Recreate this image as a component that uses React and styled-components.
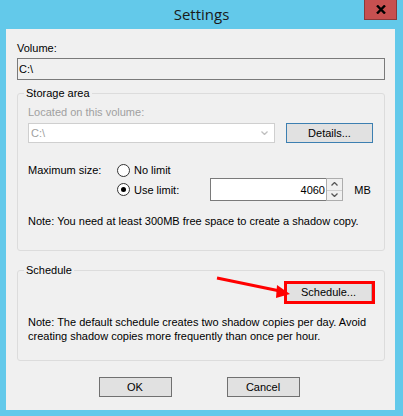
import styled, { createGlobalStyle } from "styled-components";

const Global = createGlobalStyle`
  html, body { margin: 0; padding: 0; background: #63c9ea; }
  body { font-family: "Liberation Sans", Arial, sans-serif; font-size: 11px; color: #000; }
`;

const Window = styled.div`
  width: 403px;
  height: 416px;
  background: #63c9ea;
  position: relative;
  overflow: hidden;
`;

const TitleBar = styled.div`
  height: 29px;
  display: grid;
  grid-template-columns: 1fr auto 1fr;
  align-items: start;
`;

const Title = styled.div`
  grid-column: 2;
  font-family: "Open Sans", "Liberation Sans", sans-serif;
  font-size: 15px;
  line-height: 29px;
  color: #1a1a1a;
`;

const CloseBtn = styled.div`
  grid-column: 3;
  justify-self: end;
  margin-right: 6px;
  width: 33px;
  height: 20px;
  box-sizing: border-box;
  background: #c75050;
  border: 1px solid #8a3a3a;
  border-top: none;
  display: flex;
  align-items: center;
  justify-content: center;
`;

const Client = styled.div`
  margin-left: 6px;
  width: 389px;
  height: 381px;
  box-sizing: border-box;
  background: #f0f0f0;
  padding: 12px 10px 0 11px;
`;

const Label = styled.div`
  line-height: 15px;
  color: ${(p) => (p.disabled ? "#a0a0a0" : "#000")};
`;

const ReadField = styled.div`
  margin-top: 2px;
  height: 22px;
  box-sizing: border-box;
  border: 1px solid #7a7a7a;
  background: #f0f0f0;
  padding: 0 1px;
  display: flex;
  align-items: center;
`;

const Group = styled.fieldset`
  margin: ${(p) => p.$top}px 0 0 0;
  border: 1px solid #dcdcdc;
  border-radius: 3px;
  padding: ${(p) => p.$pad};
  min-width: 0;
  position: relative;
`;

const Legend = styled.legend`
  margin-left: -4px;
  padding: 0 2px;
  line-height: 15px;
`;

const ComboRow = styled.div`
  margin-top: 2px;
  display: flex;
  align-items: center;
  gap: 11px;
`;

const Combo = styled.div`
  width: 247px;
  height: 20px;
  box-sizing: border-box;
  border: 1px solid #cfcfcf;
  background: #fff;
  color: #a0a0a0;
  display: flex;
  align-items: center;
  justify-content: space-between;
  padding: 0 6px 0 2px;
`;

const Button = styled.div`
  width: ${(p) => p.$w || 87}px;
  height: 20px;
  box-sizing: border-box;
  border: 1px solid ${(p) => p.$border || "#adadad"};
  background: #e1e1e1;
  display: flex;
  align-items: center;
  justify-content: center;
  position: relative;
  margin-top: ${(p) => p.$mt || 0}px;
`;

const SizeGrid = styled.div`
  margin-top: 19px;
  display: grid;
  grid-template-columns: 89px 93px auto auto;
  grid-template-rows: 16px 23px;
  align-items: center;
`;

const Radio = styled.label`
  display: flex;
  align-items: center;
  gap: 4px;
  grid-column: 2;
`;

const Circle = styled.span`
  width: 11px;
  height: 11px;
  border: 1px solid #333;
  border-radius: 50%;
  background: #fff;
  display: flex;
  align-items: center;
  justify-content: center;
  &::after {
    content: "";
    width: 5px;
    height: 5px;
    border-radius: 50%;
    background: ${(p) => (p.$on ? "#000" : "transparent")};
  }
`;

const Spin = styled.div`
  display: flex;
  height: 23px;
`;

const NumInput = styled.div`
  width: 116px;
  box-sizing: border-box;
  border: 1px solid #7a7a7a;
  border-right: none;
  background: #fff;
  display: flex;
  align-items: center;
  justify-content: flex-end;
  padding-right: 1px;
`;

const Arrows = styled.div`
  width: 17px;
  display: grid;
  grid-template-rows: 1fr 1fr;
  border: 1px solid #adadad;
  box-sizing: border-box;
  background: #f0f0f0;
`;

const ArrowCell = styled.div`
  display: flex;
  align-items: center;
  justify-content: center;
  border-top: ${(p) => (p.$bottom ? "1px solid #cfcfcf" : "none")};
`;

const Unit = styled.span`
  margin-left: 8px;
`;

const Note = styled.div`
  margin-top: ${(p) => p.$mt}px;
  line-height: 14px;
`;

const ButtonRight = styled.div`
  display: flex;
  justify-content: flex-end;
  padding-right: 2px;
  margin-top: 4px;
`;

const Highlight = styled.span`
  position: absolute;
  left: -2px;
  top: -2px;
  width: 91px;
  height: 23px;
  box-sizing: border-box;
  border: 3px solid #ff0000;
`;

const Footer = styled.div`
  display: flex;
  justify-content: center;
  gap: 55px;
  margin-top: 16px;
  padding-right: 4px;
`;

const ArrowMark = styled.svg`
  position: absolute;
  left: 0;
  top: 0;
  pointer-events: none;
`;

function Chevron({ up, color = "#555" }) {
  return (
    <svg width="7" height="4" viewBox="0 0 7 4">
      <path d={up ? "M0.5 3.5 L3.5 0.5 L6.5 3.5" : "M0.5 0.5 L3.5 3.5 L6.5 0.5"} fill="none" stroke={color} strokeWidth="1.3" />
    </svg>
  );
}

export default function App() {
  return (
    <Window>
      <Global />
      <TitleBar>
        <Title>Settings</Title>
        <CloseBtn>
          <svg width="10" height="9" viewBox="0 0 10 9">
            <path d="M1 0.5 L9 8.5 M9 0.5 L1 8.5" stroke="#000" strokeWidth="2.4" />
          </svg>
        </CloseBtn>
      </TitleBar>
      <Client>
        <Label>Volume:</Label>
        <ReadField>C:\</ReadField>

        <Group $top={6} $pad="4px 10px 22px 10px">
          <Legend>Storage area</Legend>
          <Label disabled>Located on this volume:</Label>
          <ComboRow>
            <Combo>
              C:\
              <Chevron color="#bfbfbf" />
            </Combo>
            <Button $border="#3c7fb1" $mt={1}>Details...</Button>
          </ComboRow>
          <SizeGrid>
            <span>Maximum size:</span>
            <Radio>
              <Circle />
              No limit
            </Radio>
            <span />
            <span />
            <span />
            <Radio>
              <Circle $on />
              Use limit:
            </Radio>
            <Spin>
              <NumInput>4060</NumInput>
              <Arrows>
                <ArrowCell><Chevron up /></ArrowCell>
                <ArrowCell $bottom><Chevron /></ArrowCell>
              </Arrows>
            </Spin>
            <Unit>MB</Unit>
          </SizeGrid>
          <Note $mt={13}>Note: You need at least 300MB free space to create a shadow copy.</Note>
        </Group>

        <Group $top={12} $pad="0 10px 17px 10px">
          <Legend>Schedule</Legend>
          <ButtonRight>
            <Button>
              Schedule...
              <Highlight />
            </Button>
          </ButtonRight>
          <Note $mt={13}>
            Note: The default schedule creates two shadow copies per day. Avoid
            <br />
            creating shadow copies more frequently than once per hour.
          </Note>
        </Group>

        <Footer>
          <Button $w={73} $border="#707070">OK</Button>
          <Button $w={73} $border="#707070">Cancel</Button>
        </Footer>
      </Client>
      <ArrowMark width="403" height="416">
        <line x1="217" y1="278" x2="280" y2="291" stroke="#ff0000" strokeWidth="3" />
        <polygon points="290,294 277,285 276,298" fill="#ff0000" />
      </ArrowMark>
    </Window>
  );
}
